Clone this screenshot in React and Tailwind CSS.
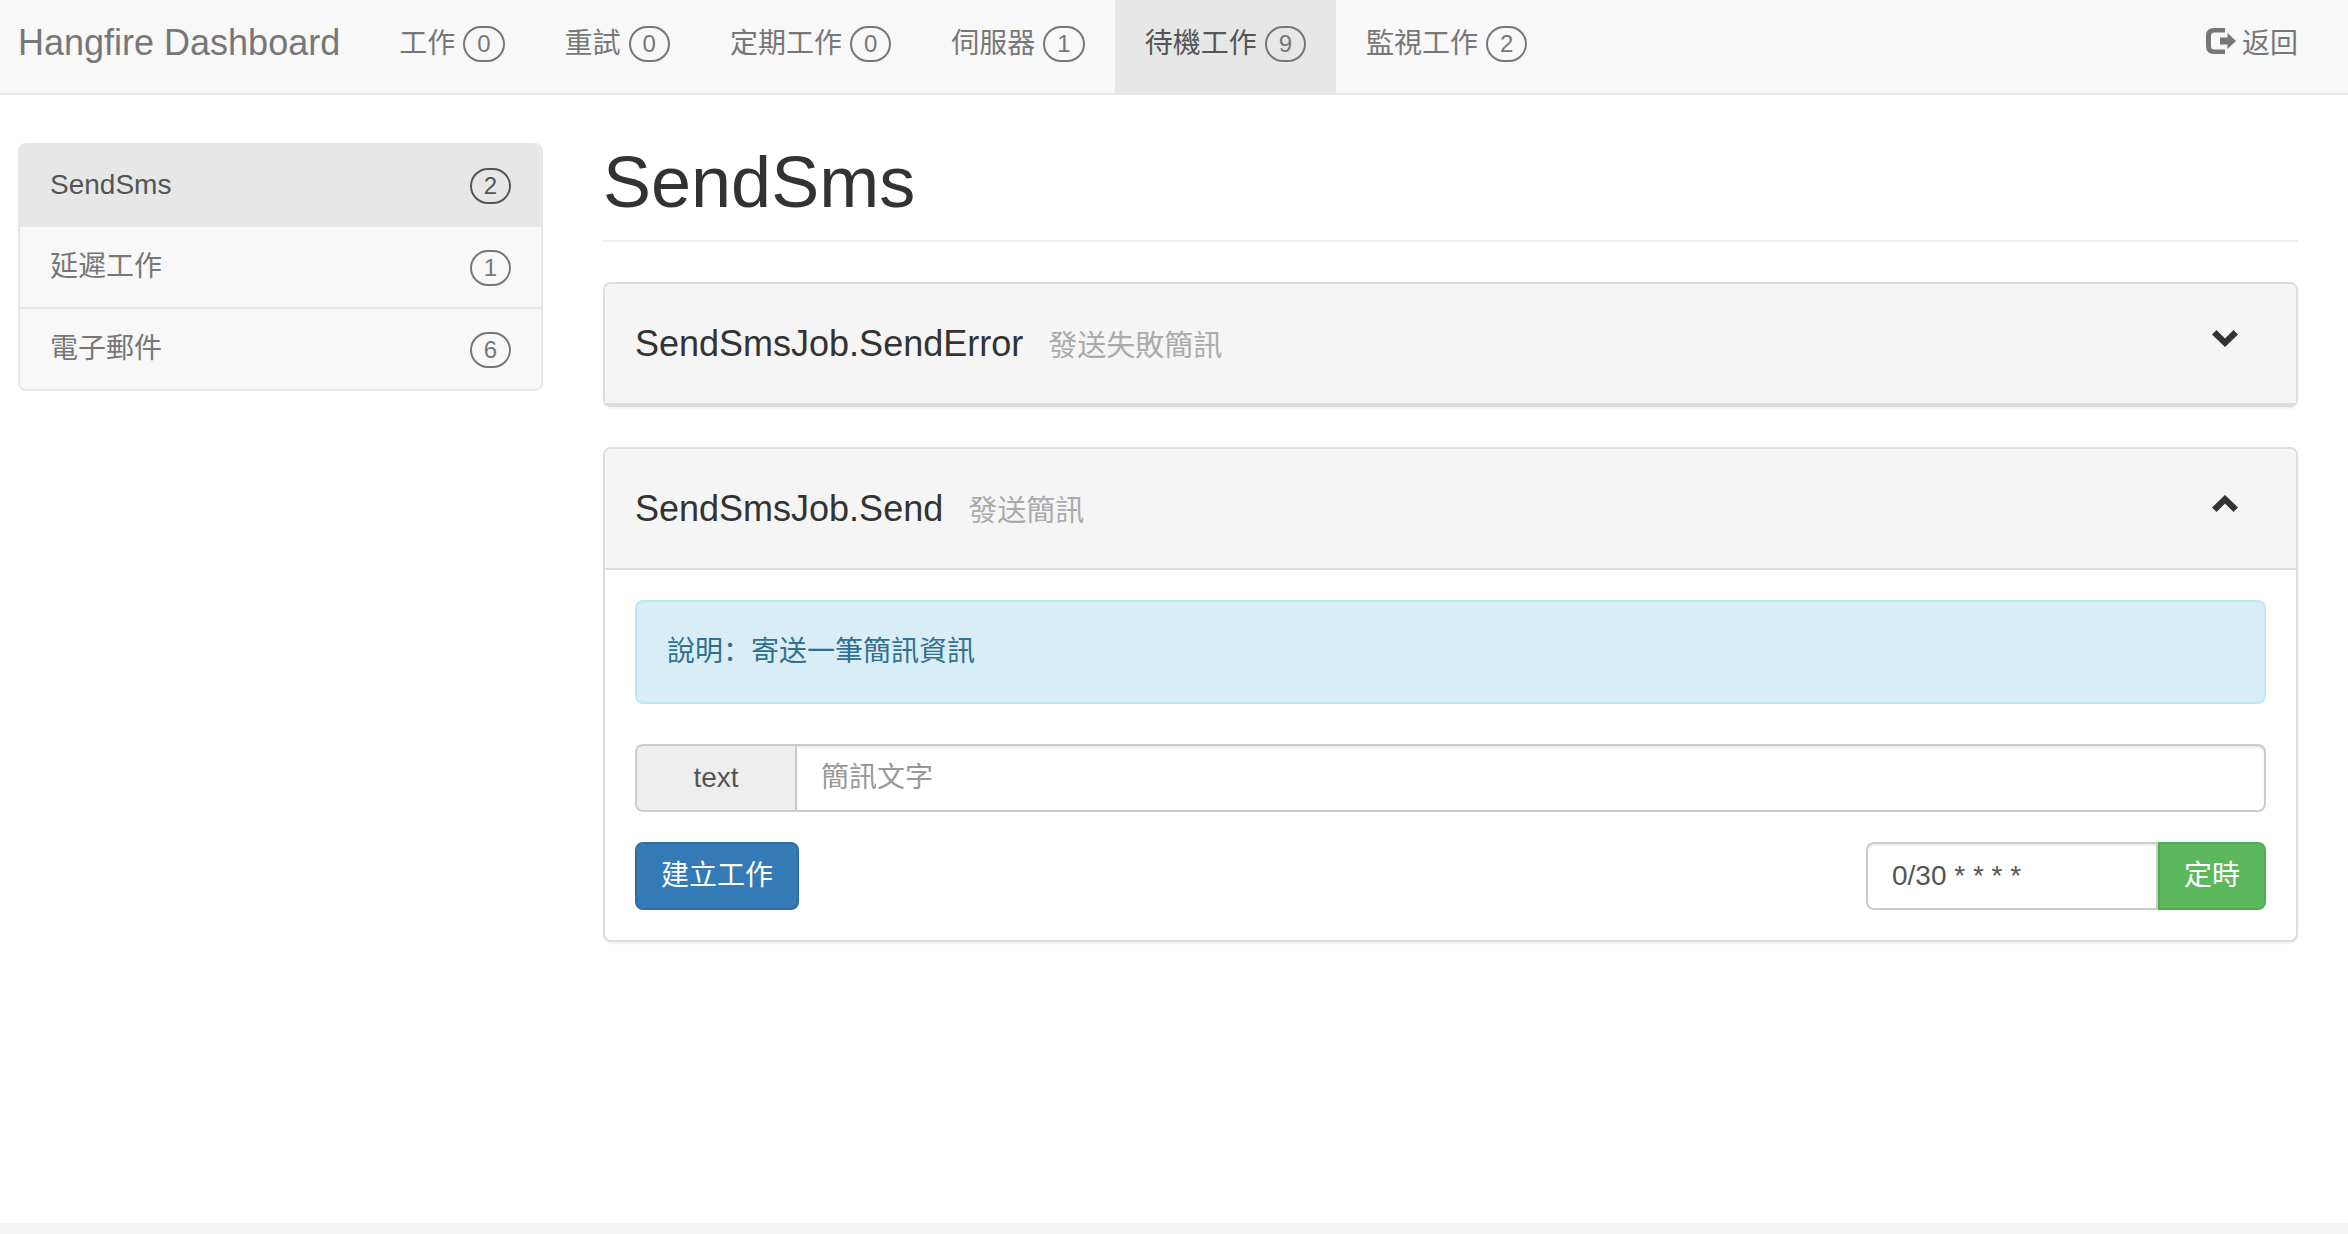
const navItems = [
  { label: '工作', count: 0 },
  { label: '重試', count: 0 },
  { label: '定期工作', count: 0 },
  { label: '伺服器', count: 1 },
  { label: '待機工作', count: 9, active: true },
  { label: '監視工作', count: 2 },
];

const sideItems = [
  { label: 'SendSms', count: 2, active: true },
  { label: '延遲工作', count: 1 },
  { label: '電子郵件', count: 6 },
];

function Badge({ dark, children }) {
  return (
    <span
      className={`inline-flex h-9 min-w-[41px] items-center justify-center rounded-[20px] border-2 px-3 text-2xl leading-8 ${
        dark ? 'border-[#555] text-[#555]' : 'border-[#777] text-[#777]'
      }`}
    >
      {children}
    </span>
  );
}

function LogOutIcon() {
  return (
    <svg viewBox="0 0 30 26" className="h-[26px] w-[30px]" fill="currentColor" aria-hidden="true">
      <path d="M19 0H8Q0 0 0 8v10q0 8 8 8h11v-4.500H8.500Q5 21.500 5 18V8q0-3.500 3.500-3.500H19z" />
      <path d="M14 9.500h7.500V5L30 13l-8.500 8v-4.500H14z" />
    </svg>
  );
}

function Chevron({ up }) {
  return (
    <svg viewBox="0 0 26 17" className="h-[17px] w-[26px]" fill="currentColor" aria-hidden="true">
      {up ? <path d="M13 0L26 12.500 21.500 17 13 8.500 4.500 17 0 12.500z" /> : <path d="M13 17L0 4.500 4.500 0 13 8.500 21.500 0 26 4.500z" />}
    </svg>
  );
}

function Panel({ title, subtitle, open, children }) {
  return (
    <section className="mb-10 rounded-lg border-2 border-[#ddd] bg-white shadow-[0_2px_2px_rgba(0,0,0,0.05)]">
      <h4 className="rounded-t-md border-b-2 border-[#ddd] bg-[#f5f5f5]">
        <button type="button" aria-expanded={!!open} className="flex w-full items-start px-[30px] py-10 text-left">
          <span className="flex flex-1 items-baseline gap-[25px] text-4xl leading-[39px] text-[#333]">
            {title}
            <small className="text-[29px] leading-[29px] text-[#aaa]">{subtitle}</small>
          </span>
          <span className="mr-[28px] mt-[6px] flex text-[#333]">
            <Chevron up={open} />
          </span>
        </button>
      </h4>
      {children}
    </section>
  );
}

export default function App() {
  return (
    <div className="flex min-h-screen flex-col bg-white font-['Liberation_Sans','Noto_Sans_CJK_SC',sans-serif] text-[28px] leading-10 text-[#333]">
      <nav className="flex h-[95px] border-b-2 border-[#e7e7e7] bg-[#f8f8f8] pl-[18px] pr-[50px] text-[#777]">
        <a href="#" className="pr-[29px] pt-[23px] text-4xl leading-10">
          Hangfire Dashboard
        </a>
        <ul className="flex flex-1">
          {navItems.map((item) => (
            <li key={item.label}>
              <a
                href="#"
                className={`flex h-full items-start gap-2 px-[30px] pt-6 ${item.active ? 'bg-[#e7e7e7] text-[#555]' : ''}`}
              >
                {item.label}
                <span className="flex pt-[2px]">
                  <Badge>{item.count}</Badge>
                </span>
              </a>
            </li>
          ))}
        </ul>
        <a href="#" className="flex items-start gap-[6px] pt-6">
          <span className="flex pt-1">
            <LogOutIcon />
          </span>
          返回
        </a>
      </nav>

      <div className="flex flex-1 items-start gap-[60px] pl-[18px] pr-[50px] pt-12">
        <aside className="w-[525px] shrink-0 divide-y-2 divide-[#e7e7e7] overflow-hidden rounded-lg border-2 border-[#e7e7e7]">
          {sideItems.map((item) => (
            <a
              key={item.label}
              href="#"
              className={`flex items-start justify-between px-[30px] py-5 ${
                item.active ? 'bg-[#e7e7e7] text-[#555]' : 'bg-[#f8f8f8] text-[#777]'
              }`}
            >
              {item.label}
              <span className="flex pt-[3px]">
                <Badge dark={item.active}>{item.count}</Badge>
              </span>
            </a>
          ))}
        </aside>

        <main className="min-w-0 flex-1">
          <h1 className="mb-10 border-b-2 border-[#eee] pb-[18px] text-7xl leading-[79px]">SendSms</h1>

          <Panel title="SendSmsJob.SendError" subtitle="發送失敗簡訊" />

          <Panel title="SendSmsJob.Send" subtitle="發送簡訊" open>
            <div className="p-[30px]">
              <div className="mb-10 rounded-lg border-2 border-[#bce8f1] bg-[#d9edf7] p-[30px] text-[#31708f]">
                說明：寄送一筆簡訊資訊
              </div>
              <div className="mb-[30px] flex h-[68px]">
                <label
                  htmlFor="sms-text"
                  className="flex w-[160px] items-center justify-center rounded-l-lg border-2 border-r-0 border-[#ccc] bg-[#eee] text-[#555]"
                >
                  text
                </label>
                <input
                  id="sms-text"
                  type="text"
                  placeholder="簡訊文字"
                  className="min-w-0 flex-1 rounded-r-lg border-2 border-[#ccc] bg-white px-6 text-[#555] shadow-[inset_0_2px_2px_rgba(0,0,0,0.075)] placeholder:text-[#999]"
                />
              </div>
              <div className="flex items-center justify-between">
                <button
                  type="button"
                  className="h-[68px] rounded-lg border-2 border-[#2e6da4] bg-[#337ab7] px-6 text-white"
                >
                  建立工作
                </button>
                <div className="flex h-[68px]">
                  <input
                    type="text"
                    aria-label="Cron"
                    defaultValue="0/30 * * * *"
                    className="w-[292px] rounded-l-lg border-2 border-[#ccc] bg-white px-6 text-[#555] shadow-[inset_0_2px_2px_rgba(0,0,0,0.075)]"
                  />
                  <button
                    type="button"
                    className="rounded-r-lg border-2 border-[#4cae4c] bg-[#5cb85c] px-6 text-white"
                  >
                    定時
                  </button>
                </div>
              </div>
            </div>
          </Panel>
        </main>
      </div>

      <footer className="h-[11px] bg-[#f5f5f5]" />
    </div>
  );
}
